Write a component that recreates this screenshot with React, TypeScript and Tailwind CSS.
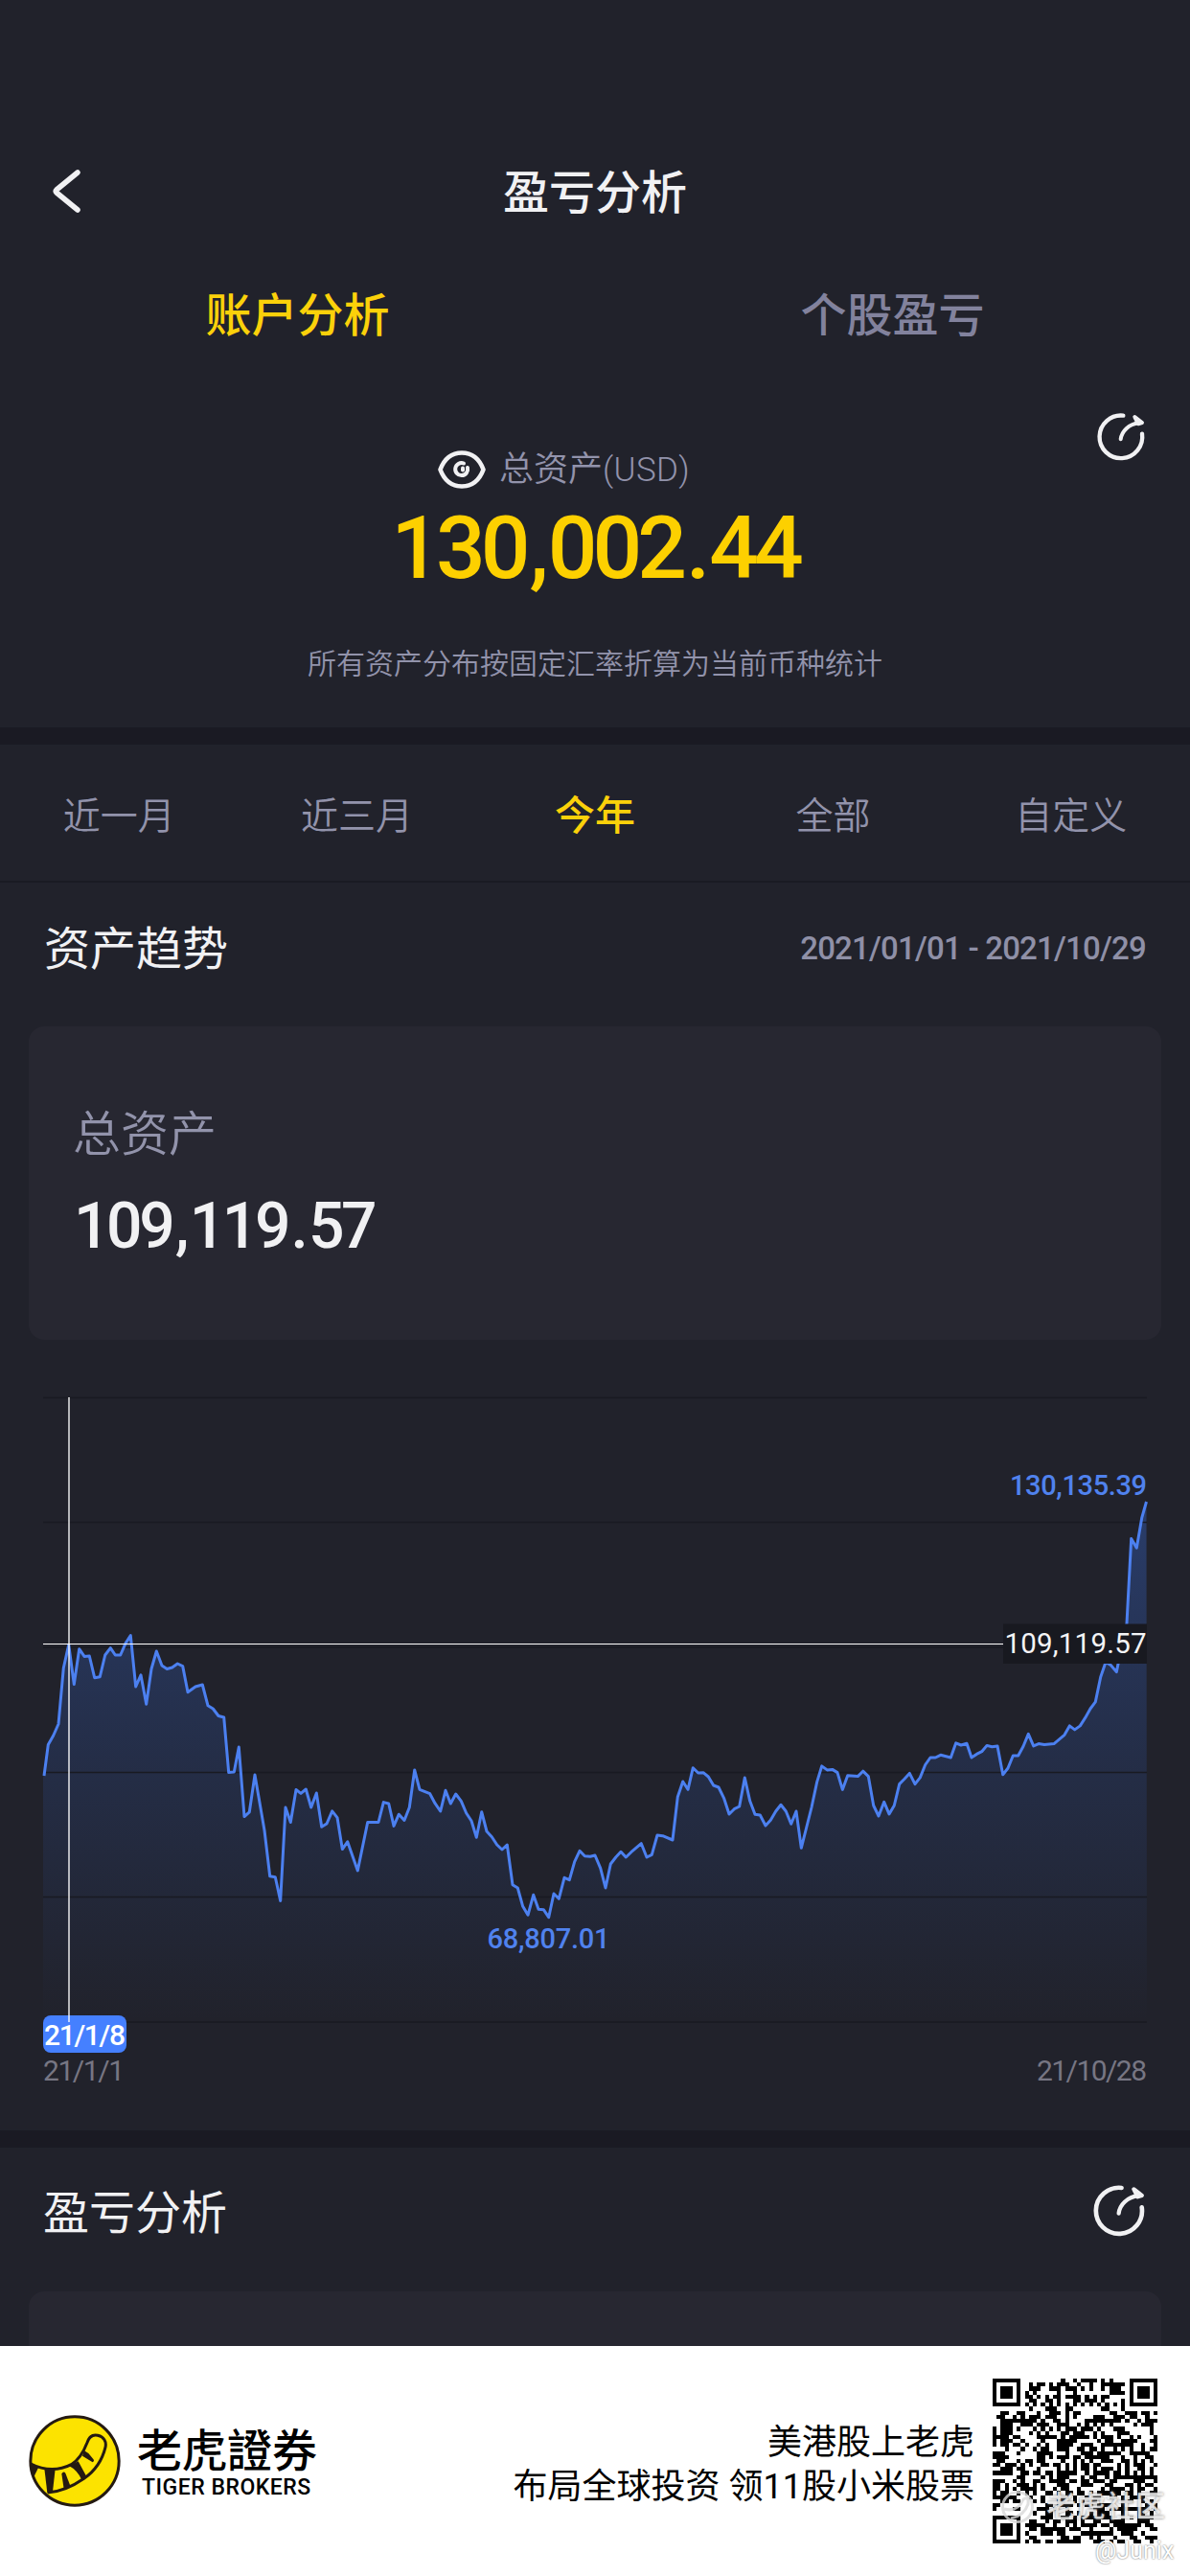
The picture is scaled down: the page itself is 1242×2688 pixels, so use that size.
import React, { useState } from 'react';

type Ponto = [number, number];

const PERIODOS = ['近一月', '近三月', '今年', '全部', '自定义'];

// Curva de ativos, já em coordenadas do gráfico (1152 x 652)
const CURVA: Ponto[] = [
  [1, 395], [5.3, 362.5], [10.7, 353], [16, 341], [21.3, 282.5], [26.7, 258.3], [32.3, 299.5], [37.7, 262.7],
  [43, 270.4], [48.3, 270], [53.7, 292.7], [59.3, 291.7], [64.7, 269], [70.3, 261.7], [75.3, 269], [80.7, 269],
  [86, 256.8], [91.3, 248.6], [96.7, 302], [102, 289.8], [107.7, 320.3], [113, 283.5], [118.3, 265], [124, 280],
  [129.3, 283.5], [134.7, 282], [140.3, 278], [145.7, 280.6], [151, 307.7], [159, 302], [166.3, 300], [172, 321.8],
  [177.3, 325], [183, 332.5], [188.7, 334], [193.7, 391.6], [199.3, 391], [204.3, 365], [210, 437.6], [215.3, 432.8],
  [221, 394], [231, 452], [236.7, 499.7], [242.3, 500.7], [247.7, 525.4], [253, 428], [258.3, 443.5], [264, 409.5],
  [269, 413.4], [274.3, 409], [279.7, 428], [285.3, 413], [290.7, 448.3], [296, 445], [301.7, 431.8], [307, 438.6],
  [312.3, 471.6], [317.7, 463.8], [328.3, 493.9], [338.7, 443.5], [350, 443.5], [355.3, 422.6], [360.7, 424],
  [366, 447.4], [371.3, 435.2], [377, 441.5], [382.3, 428], [387.7, 389], [393, 409.3], [403.7, 413.7], [409, 423.7],
  [414.7, 432], [420, 410.3], [425.3, 424], [430.7, 414], [436.3, 421.3], [441.7, 434], [447, 442], [452.3, 459.3],
  [457.7, 432.7], [463, 453], [468.3, 458.7], [473.7, 467], [479, 472], [484.3, 467], [490, 508.7], [495.3, 512],
  [500.7, 531.3], [506, 540.3], [511.7, 519.3], [517, 534.3], [522.3, 534.7], [527.7, 542.7], [533, 518],
  [538.3, 523.3], [544, 501.3], [549.3, 503.7], [554.7, 484.7], [560, 473.3], [565.3, 478.7], [571, 479.3],
  [576, 478], [581.7, 491.3], [587, 512], [592.3, 487], [597.7, 480], [603, 474.3], [608.3, 480], [613.7, 474.7],
  [624.3, 465.7], [630, 480], [635.3, 477.3], [641, 457], [646.7, 457.7], [657, 462], [662.3, 417], [667.7, 401],
  [673, 409.3], [678.3, 386.7], [683.7, 392], [689, 391.7], [694.3, 396], [699.7, 405], [705, 407], [710.7, 418.7],
  [716, 435], [721.3, 429.7], [726.7, 427], [732.3, 397], [737.7, 421.3], [743, 435.3], [748.3, 436], [754, 447],
  [759.3, 441.3], [764.7, 432], [770, 425.3], [775.3, 432], [780.7, 445.3], [786, 432], [791.3, 470.3], [796.7, 449],
  [802, 428], [807.7, 401.4], [812.7, 384.9], [818.3, 388.9], [823.7, 388.4], [829, 391.6], [834.3, 409.4],
  [839.7, 394.7], [850.3, 395.6], [855.7, 390.2], [861.3, 395.6], [866.7, 426], [872, 437], [877.7, 422.4],
  [883, 434.9], [888.3, 426], [893.7, 403.6], [899, 398.3], [904.3, 392.4], [910, 403.6], [915.3, 396.9],
  [920.7, 383.5], [926, 376], [931.3, 376], [936.7, 373.3], [947.3, 376], [952.7, 360.8], [958, 363], [964, 361.2],
  [969, 376], [974.3, 372.4], [979.7, 369.7], [985, 363.4], [990.3, 364.8], [996, 363.9], [1001.7, 393.8],
  [1007, 387], [1012.3, 374], [1017.7, 374], [1023, 364.3], [1028.3, 351.4], [1033.7, 363.9], [1039, 361.6],
  [1045, 362.5], [1055, 361.6], [1066, 352.3], [1071.3, 342.9], [1076.7, 346.9], [1082.3, 342.9], [1087.7, 334.4],
  [1093, 325], [1098.3, 317.9], [1103.7, 292], [1109, 276.4], [1114.3, 279.5], [1120.3, 286.6], [1125.3, 262],
  [1131, 236], [1135.7, 147.4], [1141.3, 157.2], [1146.7, 125.9], [1151.5, 109],
];

const linha = CURVA.map(([x, y], i) => `${i === 0 ? 'M' : 'L'}${x} ${y}`).join(' ');
const area = `${linha} L1152 652 L0 652 L0 395 Z`;

// Valor com separadores um pouco mais largos que o padrão da fonte
function Valor({ texto, className, sep }: { texto: string; className: string; sep: string }) {
  return (
    <span className={className}>
      {texto.split(/([.,])/).map((parte, i) =>
        parte === ',' || parte === '.' ? (
          <span key={i} className={sep}>{parte}</span>
        ) : (
          parte
        )
      )}
    </span>
  );
}

function IconeGirar({ className }: { className: string }) {
  return (
    <svg className={className} viewBox="36 36 156 156" fill="none" stroke="#f1f1f3" strokeLinecap="round" strokeLinejoin="round">
      <path d="M121 47 A67 67 0 1 0 180 104" strokeWidth="13" />
      <path d="M113 121 C116 96 138 74 170 70" strokeWidth="12" />
      <path d="M157 51 L180 69 L168 73 Z" strokeWidth="12" fill="#f1f1f3" />
    </svg>
  );
}

function IconeOlho() {
  return (
    <svg className="h-10 w-[50px]" viewBox="0 0 50 40" fill="none" stroke="#f1f1f3" strokeLinecap="round">
      <path d="M2.5 20 C7 8 15 2.5 25 2.5 C35 2.5 43 8 47.5 20 C43 32 35 37.5 25 37.5 C15 37.5 7 32 2.5 20 Z" strokeWidth="4.6" strokeLinejoin="round" />
      <path d="M27 13.500 A6.5 6.5 0 1 0 31 18 " strokeWidth="4" />
      <path d="M26 18.500 V20.500" strokeWidth="4" />
    </svg>
  );
}

function LogoTigre() {
  return (
    <svg className="size-24" viewBox="89 238 288 288">
      <circle cx="233" cy="382" r="138.5" fill="#fce300" stroke="#241a12" strokeWidth="9" />
      <path
        d="M96 391 C140 414 186 412 222 393 C248 377 262 350 272 324 C279 304 292 299 305 302 C324 306 333 321 329 339 C320 376 298 412 262 437 C226 462 190 479 148 481"
        fill="none"
        stroke="#241a12"
        strokeWidth="9"
      />
      <g fill="#241a12">
        <path d="M95 390 L119 403 L104 434 L96 415 Z" />
        <path d="M138 405 L172 407 L164 478 L147 482 Z" />
        <path d="M192 422 Q198 412 204 420 L220 462 L199 470 Z" />
        <path d="M216 398 L244 383 L270 431 L255 441 Q240 410 216 398 Z" />
        <path d="M262 349 L257 366 L289 386 Q296 382 291 376 L276 358 Z" />
      </g>
    </svg>
  );
}

const N = 41;

function gerarQr() {
  let semente = 20211;
  let d = '';
  const olho = (x: number, y: number) => {
    const r = Math.max(Math.abs(x - 3), Math.abs(y - 3));
    return r !== 2 && r < 4;
  };
  for (let y = 0; y < N; y++) {
    for (let x = 0; x < N; x++) {
      semente = (semente * 1103515245 + 12345) % 2147483648;
      let preto = (semente >> 12) % 100 < 52;
      if (x < 8 && y < 8) preto = olho(x, y);
      else if (x > N - 9 && y < 8) preto = olho(N - 1 - x, y);
      else if (x < 8 && y > N - 9) preto = olho(x, N - 1 - y);
      else if (x === 6 || y === 6) preto = (x + y) % 2 === 0;
      else if (Math.abs(x - 34) < 3 && Math.abs(y - 34) < 3) {
        preto = Math.max(Math.abs(x - 34), Math.abs(y - 34)) !== 1;
      }
      if (preto) d += `M${x} ${y}h1v1h-1z`;
    }
  }
  return d;
}

const QR = gerarQr();

function Grafico() {
  return (
    <svg className="ml-[45px] block h-[730px] w-[1152px] overflow-visible" viewBox="0 0 1152 730" fontFamily="Roboto, sans-serif">
      <defs>
        <linearGradient id="preenchimento" x1="0" y1="109" x2="0" y2="652" gradientUnits="userSpaceOnUse">
          <stop offset="0" stopColor="#3a72e8" stopOpacity="0.34" />
          <stop offset="0.5" stopColor="#3466d0" stopOpacity="0.17" />
          <stop offset="1" stopColor="#3466d0" stopOpacity="0" />
        </linearGradient>
      </defs>
      <path d={area} fill="url(#preenchimento)" />
      {[0, 130, 260.5, 391, 521, 651.5].map((y) => (
        <line key={y} x1="0" x2="1152" y1={y + 0.5} y2={y + 0.5} stroke="#191a22" strokeWidth="1.5" />
      ))}
      <path d={linha} fill="none" stroke="#4c80f0" strokeWidth="3" strokeLinejoin="round" />

      {/* Mira */}
      <line x1="0" x2="1002" y1="257.5" y2="257.5" stroke="#ffffff" strokeWidth="1.2" />
      <rect x="1002" y="236.5" width="150" height="41.5" fill="#181920" />
      <text x="1003.5" y="267" fontSize="29.5" fill="#f4f4f6" textLength="148">109,119.57</text>

      <text x="1009" y="101.5" fontSize="29" fontWeight="500" fill="#5082ee" textLength="143">130,135.39</text>
      <text x="463.5" y="574.5" fontSize="29" fontWeight="500" fill="#5082ee" textLength="128">68,807.01</text>

      <rect x="0" y="645" width="87" height="39" rx="8" fill="#4580ff" />
      <line x1="27" x2="27" y1="0" y2="652" stroke="#ffffff" strokeOpacity="0.75" strokeWidth="1.8" />
      <text x="1" y="676" fontSize="30" fontWeight="500" fill="#ffffff" textLength="85">21/1/8</text>
      <text x="0" y="712.5" fontSize="30" fill="#777683" textLength="85">21/1/1</text>
      <text x="1037" y="712.5" fontSize="30" fill="#777683" textLength="115">21/10/28</text>
    </svg>
  );
}

export default function App() {
  const [periodo, setPeriodo] = useState('今年');

  return (
    <div className="flex h-[2688px] w-[1242px] flex-col overflow-hidden bg-[#21222b] font-['Roboto','Noto_Sans_CJK_SC',sans-serif] text-[#f1f1f3]">
      {/* Cabeçalho */}
      <header className="mt-40 grid h-20 shrink-0 grid-cols-[100px_1fr_100px] items-center">
        <button className="pb-1 pl-[54px]">
          <svg className="h-[46px] w-8" viewBox="0 0 32 46" fill="none" stroke="#f1f1f3" strokeWidth="5.5" strokeLinecap="round" strokeLinejoin="round">
            <path d="M27 3 L5 21 Q3.500 22.500 5 24 L27 42" />
          </svg>
        </button>
        <h1 className="text-center text-[48px] leading-[84px] font-medium">盈亏分析</h1>
      </header>

      <nav className="grid h-44 shrink-0 grid-cols-2 text-center text-[48px] leading-[179px] font-medium">
        <button className="text-[#fbd10a]">账户分析</button>
        <button className="text-[#82829d]">个股盈亏</button>
      </nav>

      {/* Total de ativos */}
      <section className="relative flex h-[343px] shrink-0 flex-col items-center pt-[50px]">
        <IconeGirar className="absolute top-3.5 left-[1144px] size-[52px]" />
        <div className="mr-[65px] flex h-12 items-center gap-3.5 text-[36px] font-[350] text-[#9293ab]">
          <IconeOlho />
          <span className="leading-[50px]">总资产<span className="text-[35px] tracking-[0.3px]">(USD)</span></span>
        </div>
        <Valor
          texto="130,002.44"
          className="text-[91px] leading-[116px] font-medium tracking-[-5px] text-[#fdd000]"
          sep="pr-[4px] pl-[4px]"
        />
        <p className="text-[30px] leading-[126px] font-[350] text-[#9293ab]">所有资产分布按固定汇率折算为当前币种统计</p>
      </section>

      <div className="h-[18px] shrink-0 bg-[#1a1a23]" />

      <nav className="grid h-[144px] shrink-0 grid-cols-5 border-b-2 border-[#1a1b23] text-center text-[39px]">
        {PERIODOS.map((p) => (
          <button
            key={p}
            onClick={() => setPeriodo(p)}
            className={`leading-[150px] ${p === periodo ? 'text-[42px] font-medium text-[#fbd10a]' : 'font-[350] text-[#9293ab]'}`}
          >
            {p}
          </button>
        ))}
      </nav>

      {/* Tendência */}
      <section className="flex h-[1302px] shrink-0 flex-col">
        <div className="flex h-[150px] items-center justify-between pr-[46px] pb-[10px] pl-[46px] leading-[140px]">
          <h2 className="text-[48px]">资产趋势</h2>
          <span className="pb-0.5 text-[33px] font-medium tracking-[-0.8px] text-[#8f90a7]">2021/01/01 - 2021/10/29</span>
        </div>
        <div className="mx-[30px] flex h-[327px] flex-col rounded-2xl bg-[#272731] pt-[75px] pl-[46px]">
          <span className="text-[50px] leading-[76px] font-[350] text-[#9293ab]">总资产</span>
          <Valor texto="109,119.57" className="pl-px text-[66px] leading-[116px] font-medium tracking-[-3.4px]" sep="pr-[3.500px] pl-[3.500px]" />
        </div>
        <div className="mt-[60px]">
          <Grafico />
        </div>
      </section>

      <div className="h-[18px] shrink-0 bg-[#1a1a23]" />

      <section className="flex h-[207px] shrink-0 flex-col">
        <div className="flex h-[150px] items-center justify-between pr-[46px] pl-[45px] pb-3">
          <h2 className="text-[48px] leading-[140px]">盈亏分析</h2>
          <IconeGirar className="-mt-1.5 size-14" />
        </div>
        <div className="mx-[30px] flex-1 rounded-t-2xl bg-[#272731]" />
      </section>

      {/* Rodapé */}
      <footer className="relative flex h-[240px] shrink-0 items-center bg-white pr-[34px] pl-[30px] text-black">
        <LogoTigre />
        <div className="ml-[17px] flex flex-col">
          <span className="font-['Noto_Sans_CJK_TC',sans-serif] text-[47px] leading-[56px] font-medium">老虎證券</span>
          <span className="pl-[5px] text-[23px] leading-[28px] font-medium tracking-[0.5px]">TIGER BROKERS</span>
        </div>
        <p className="ml-auto pt-[7px] text-right text-[36px] leading-[46px]">
          美港股上老虎
          <br />
          布局全球投资 领11股小米股票
        </p>
        <svg className="ml-[19px] size-[172px]" viewBox="0 0 41 41" shapeRendering="crispEdges">
          <path d={QR} fill="#000000" />
        </svg>

        {/* Marca d'água */}
        <div className="absolute top-[146px] left-[1044px] flex items-center gap-3 text-white/75">
          <svg className="size-9" viewBox="0 0 36 36" fill="none" stroke="#d8d8d8" strokeOpacity="0.8" strokeWidth="3">
            <circle cx="18" cy="18" r="15.500" />
            <path d="M4 20 Q18 24 24 10 Q30 6 29 15 Q25 27 11 30" />
          </svg>
          <span className="text-[31px] leading-[44px] font-medium [text-shadow:0_0_3px_#777]">老虎社区</span>
        </div>
        <span className="absolute top-[199px] left-[1143px] text-[25px] leading-[30px] text-white [text-shadow:0_0_2px_#555]">@Junix</span>
      </footer>
    </div>
  );
}
